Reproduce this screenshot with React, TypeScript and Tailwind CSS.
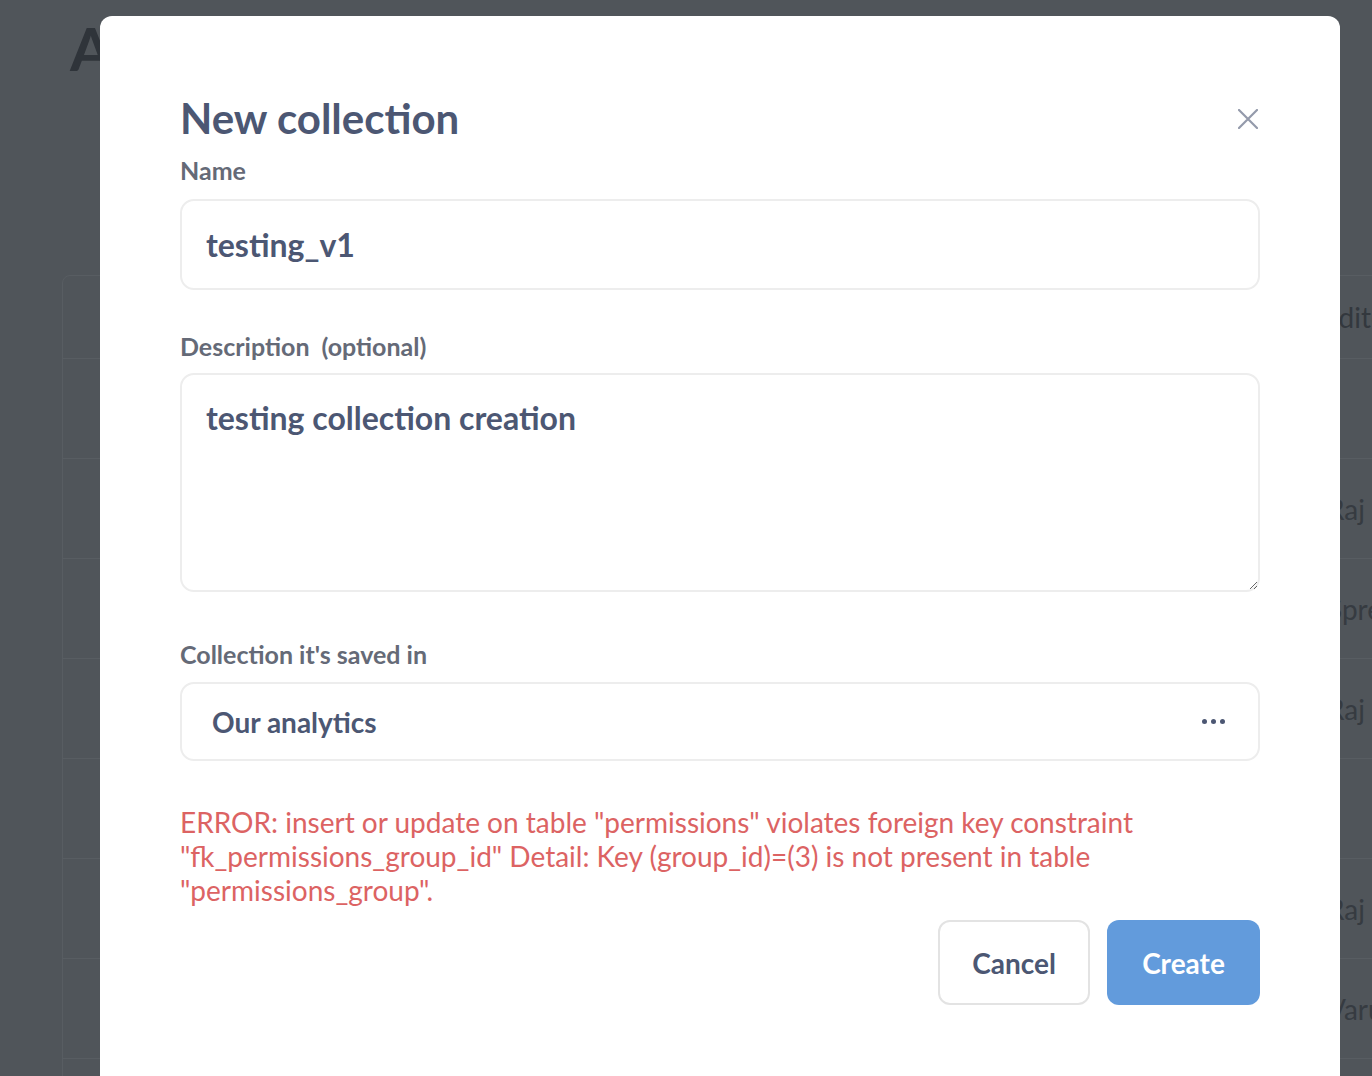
import React from "react"

const rows = ["", "Raj", "Spreya", "Raj", "", "Raj", "Varun", ""]

const Backdrop = () => (
  <div className="px-[62px] pt-[18px]">
    <h1 className="ml-[8px] text-[60px] leading-none font-bold text-[#2f343a]">
      Audit
    </h1>
    <div className="mt-[197px] w-[1400px] rounded-[8px] border border-[#585d62]">
      <div className="flex h-[82px] items-center">
        <div className="w-[1260px]" />
        <span className="text-[28px] text-[#33383e]">Edited by</span>
      </div>
      {rows.map((who, i) => (
        <div
          key={i}
          className="flex h-[100px] items-center border-t border-[#585d62]"
        >
          <div className="w-[1264px]" />
          <span className="text-[28px] text-[#363b41]">{who}</span>
        </div>
      ))}
    </div>
  </div>
)

const CloseIcon = () => (
  <svg width="20" height="20" viewBox="0 0 20 20" fill="none">
    <path
      d="M1 1L19 19M19 1L1 19"
      stroke="#949aab"
      strokeWidth="2.2"
      strokeLinecap="round"
    />
  </svg>
)

export default function App() {
  return (
    <div className="relative h-[1076px] w-full overflow-hidden bg-[#50555a] font-[Lato,sans-serif]">
      <Backdrop />

      <div className="absolute left-[100px] top-[16px] h-[1200px] w-[1240px] rounded-[12px] bg-white px-[80px] pt-[77px]">
        <div className="flex items-center justify-between">
          <h2 className="text-[42px] leading-[50px] font-bold text-[#4c5773]">
            New collection
          </h2>
          <button className="mr-[2px] mt-[2px]">
            <CloseIcon />
          </button>
        </div>

        <label className="mt-[15px] block text-[25px] leading-[25px] font-bold text-[#656a77]">
          Name
        </label>
        <input
          defaultValue="testing_v1"
          className="mt-[16px] block h-[91px] w-full rounded-[14px] border-2 border-[#ededed] px-[24px] text-[32px] font-bold text-[#4c5773] outline-none"
        />

        <label className="mt-[44px] block text-[25px] leading-[25px] font-bold text-[#656a77]">
          Description
          <span className="ml-[12px]">(optional)</span>
        </label>
        <textarea
          defaultValue="testing collection creation"
          className="mt-[14px] block h-[219px] w-full rounded-[14px] border-2 border-[#ededed] px-[24px] pt-[24px] text-[32px] leading-[38px] font-bold text-[#4c5773] outline-none"
        />

        <label className="mt-[50px] block text-[25px] leading-[25px] font-bold text-[#656a77]">
          Collection it's saved in
        </label>
        <div className="mt-[15px] flex h-[79px] items-center justify-between rounded-[14px] border-2 border-[#ededed] pl-[30px] pr-[33px]">
          <span className="text-[28px] font-bold text-[#4c5773]">
            Our analytics
          </span>
          <div className="flex gap-[4px]">
            <span className="h-[5px] w-[5px] rounded-full bg-[#4c5773]" />
            <span className="h-[5px] w-[5px] rounded-full bg-[#4c5773]" />
            <span className="h-[5px] w-[5px] rounded-full bg-[#4c5773]" />
          </div>
        </div>

        <p className="mt-[44px] text-[28px] leading-[34px] text-[#dc6363]">
          ERROR: insert or update on table "permissions" violates foreign key
          constraint "fk_permissions_group_id" Detail: Key (group_id)=(3) is
          not present in table "permissions_group".
        </p>

        <div className="mt-[13px] flex justify-end gap-[17px]">
          <button className="h-[85px] w-[152px] rounded-[12px] border-2 border-[#e3e3e3] text-[28px] font-bold text-[#4c5773]">
            Cancel
          </button>
          <button className="h-[85px] w-[153px] rounded-[12px] bg-[#629bdc] text-[28px] font-bold text-white">
            Create
          </button>
        </div>
      </div>
    </div>
  )
}
